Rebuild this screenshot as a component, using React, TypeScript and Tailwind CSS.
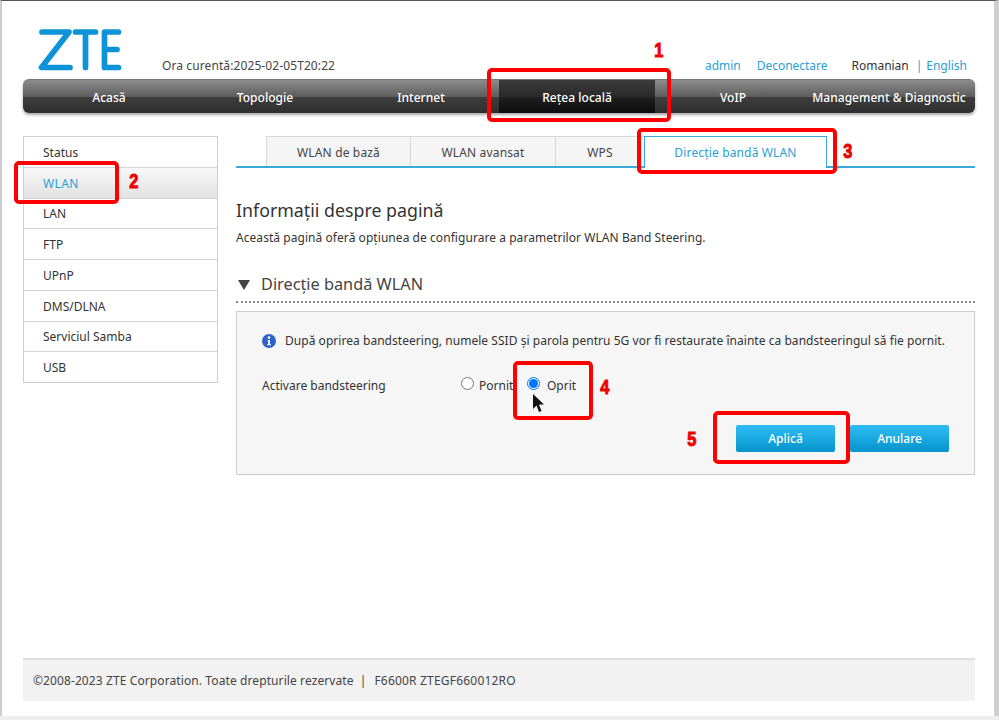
import React from "react";

const sideItems = ["Status", "WLAN", "LAN", "FTP", "UPnP", "DMS/DLNA", "Serviciul Samba", "USB"];
const navItems = ["Acasă", "Topologie", "Internet", "Rețea locală", "VoIP", "Management & Diagnostic"];

function Mark({ box, num, numCls }: { box: string; num: string; numCls: string }) {
  return (
    <>
      <div className={`absolute border-[4px] border-[#ff0000] rounded-[5px] ${box}`} />
      <div className={`absolute text-[#f00000] font-bold text-[21px] leading-[20px] origin-center scale-x-[0.78] [font-family:'Liberation_Sans',sans-serif] [-webkit-text-stroke:1px_#f00000] ${numCls}`}>
        {num}
      </div>
    </>
  );
}

export default function App() {
  return (
    <div className="relative w-[999px] h-[720px] overflow-hidden bg-[#eeeeee] text-[12px] text-[#333] [font-family:'Noto_Sans',sans-serif]">
      <div className="h-[716px] bg-white border-t border-t-[#555] border-l-2 border-l-[#cccccc] border-r-[5px] border-r-[#d0d0d0] flex flex-col pl-[21px] pr-[19px]">
        {/* header */}
        <div className="h-[78px] flex items-end relative shrink-0">
          <svg width="84" height="42" viewBox="0 0 84 42" className="ml-[15px] mb-[8px] shrink-0">
            <g fill="none" stroke="#0d94d8" strokeWidth="5.7" strokeLinecap="round" strokeLinejoin="round">
              <path d="M4 3H31L3.5 38.5H32" />
              <path d="M37.5 3H57.5M47.5 3V38.5" />
              <path d="M80.5 3H66.5V38.5H80.5M66.5 20.5H79" />
            </g>
          </svg>
          <div className="ml-[40px] mb-[4px] text-[12px] leading-[18px] text-[#444] tracking-[0.1px]">Ora curentă:2025-02-05T20:22</div>
          <div className="ml-auto mb-[4px] mr-[8px] flex items-center text-[12px] leading-[18px] tracking-[-0.02px]">
            <span className="text-[#2a9fd6]">admin</span>
            <span className="ml-[16px] text-[#2a9fd6]">Deconectare</span>
            <span className="ml-[24px] text-[#333]">Romanian</span>
            <span className="ml-[7px] mr-[4px] text-[#2a9fd6]">|</span>
            <span className="text-[#2a9fd6]">English</span>
          </div>
        </div>
        {/* nav */}
        <div className="h-[34px] shrink-0 rounded-[6px] px-[8px] grid grid-cols-6 border-t border-t-[#777] shadow-[0_2px_3px_rgba(0,0,0,0.35)] bg-[linear-gradient(#8c8c8c_0%,#5e5e5e_50%,#3e3e3e_51%,#2e2e2e_100%)]">
          {navItems.map((n, i) => (
            <div
              key={n}
              className={`flex items-center justify-center pt-[2px] whitespace-nowrap text-white text-[12px] tracking-[0.03px] font-medium ${i === 3 ? "bg-[linear-gradient(#3c3c3c_0%,#2a2a2a_50%,#1e1e1e_55%,#0c0c0c_100%)]" : ""}`}
            >
              {n}
            </div>
          ))}
        </div>
        {/* body */}
        <div className="flex flex-1 mt-[23px]">
          <div className="w-[195px] h-[247px] shrink-0 border border-[#cfcfcf] flex flex-col">
            {sideItems.map((s, i) => (
              <div
                key={s}
                className={`flex-1 flex items-center pl-[19px] pt-[2px] border-b last:border-b-0 border-[#d4d4d4] ${i === 1 ? "text-[#2a9fd6] bg-[linear-gradient(#f8f8f8,#e2e2e2)] tracking-[0.4px]" : "text-[#333]"}`}
              >
                {s}
              </div>
            ))}
          </div>
          <div className="ml-[18px] flex-1 flex flex-col">
            <div className="h-[32px] border-b-2 border-b-[#3aa8d8] flex pl-[30px] shrink-0 tracking-[0.15px]">
              <div className="w-[145px] h-[30px] pt-[2px] flex items-center justify-center bg-[#f5f5f5] border-l border-t border-r border-[#d8d8d8] text-[#444]">WLAN de bază</div>
              <div className="w-[145px] h-[30px] pt-[2px] flex items-center justify-center bg-[#f5f5f5] border-t border-r border-[#d8d8d8] text-[#444]">WLAN avansat</div>
              <div className="w-[88px] h-[30px] pt-[2px] flex items-center justify-center bg-[#f5f5f5] border-t border-[#d8d8d8] text-[#444]">WPS</div>
              <div className="w-[183px] h-[32px] flex items-center justify-center bg-white border-l border-t border-r border-[#3aa8d8] text-[#2a9fd6]">Direcție bandă WLAN</div>
            </div>
            <div className="mt-[30px] text-[17.8px] leading-[24px] text-[#333]">Informații despre pagină</div>
            <div className="mt-[7px] text-[12px] leading-[18px] text-[#333] tracking-[0.055px]">Această pagină oferă opțiunea de configurare a parametrilor WLAN Band Steering.</div>
            <div className="mt-[19px] h-[37px] pt-[2px] flex items-center border-b-2 border-dotted border-b-[#888]">
              <svg width="12" height="10" viewBox="0 0 12 10" className="ml-[2px]"><path d="M0 0H12L6 10Z" fill="#444" /></svg>
              <span className="ml-[11px] text-[16.3px] text-[#444]">Direcție bandă WLAN</span>
            </div>
            <div className="mt-[8px] h-[164px] shrink-0 bg-[#f6f6f6] border border-[#cccccc] flex flex-col pl-[25px] pr-[25px]">
              <div className="mt-[19px] h-[20px] flex items-center">
                <svg width="14" height="14" viewBox="0 0 14 14" className="shrink-0">
                  <circle cx="7" cy="7" r="7" fill="#2f62c9" />
                  <circle cx="7" cy="3.6" r="1.3" fill="#fff" />
                  <path d="M5.4 5.9H8V10.3H9V11.2H5.2V10.3H6.2V6.8H5.4Z" fill="#fff" />
                </svg>
                <span className="ml-[9px] whitespace-nowrap tracking-[0.04px]">După oprirea bandsteering, numele SSID și parola pentru 5G vor fi restaurate înainte ca bandsteeringul să fie pornit.</span>
              </div>
              <div className="mt-[25px] h-[20px] flex items-center">
                <span className="w-[199px]">Activare bandsteering</span>
                <span className="w-[13px] h-[13px] rounded-full border border-[#767676] bg-white mb-[5px]" />
                <span className="ml-[5px] w-[35px]">Pornit</span>
                <span className="ml-[13px] w-[13px] h-[13px] rounded-full border border-[#0075ff] bg-white mb-[5px] flex items-center justify-center">
                  <span className="w-[9px] h-[9px] rounded-full bg-[#0075ff]" />
                </span>
                <span className="ml-[7px]">Oprit</span>
              </div>
              <div className="mt-[29px] flex justify-end">
                <button className="w-[99px] h-[27px] rounded-[2px] text-white text-[12px] font-medium bg-[linear-gradient(#2fbdf5,#0593cc)]">Aplică</button>
                <button className="ml-[15px] w-[99px] h-[27px] rounded-[2px] text-white text-[12px] font-medium bg-[linear-gradient(#2fbdf5,#0593cc)]">Anulare</button>
              </div>
            </div>
          </div>
        </div>
        {/* footer */}
        <div className="mb-[15px] h-[43px] shrink-0 bg-[#f2f2f2] border-t-2 border-t-[#e0e0e0] flex items-center pl-[10px] text-[#444] tracking-[0.1px]">
          <span>©2008-2023 ZTE Corporation. Toate drepturile rezervate</span>
          <span className="ml-[6px] mr-[8px]">|</span>
          <span className="tracking-[0.2px]">F6600R ZTEGF660012RO</span>
        </div>
      </div>

      {/* cursor */}
      <svg width="12" height="19" viewBox="0 0 12 19" className="absolute left-[533px] top-[394px]">
        <path d="M0 0V15L3.5 11.5L6 18L8.5 17L6 10.5H11Z" fill="#111" />
      </svg>

      {/* annotations */}
      <Mark box="left-[487px] top-[68px] w-[184px] h-[54px]" num="1" numCls="left-[653px] top-[40px]" />
      <Mark box="left-[14px] top-[161px] w-[105px] h-[43px]" num="2" numCls="left-[128px] top-[171px]" />
      <Mark box="left-[637px] top-[128px] w-[200px] h-[46px]" num="3" numCls="left-[842px] top-[141px]" />
      <Mark box="left-[513px] top-[361px] w-[80px] h-[59px]" num="4" numCls="left-[599px] top-[377px]" />
      <Mark box="left-[713px] top-[411px] w-[137px] h-[53px]" num="5" numCls="left-[686px] top-[429px]" />
    </div>
  );
}
